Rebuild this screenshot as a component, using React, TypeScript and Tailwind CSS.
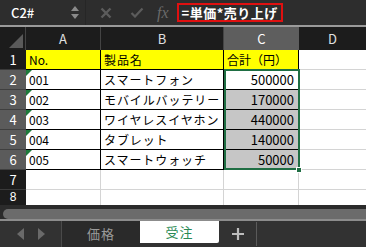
import React from "react";

const F = { fontFamily: '"Noto Sans CJK JP", "Noto Sans", sans-serif' };

const rows = [
  { n: "1", a: "No.", b: "製品名", c: "合計（円）", head: true },
  { n: "2", a: "001", b: "スマートフォン", c: "500000" },
  { n: "3", a: "002", b: "モバイルバッテリー", c: "170000" },
  { n: "4", a: "003", b: "ワイヤレスイヤホン", c: "440000" },
  { n: "5", a: "004", b: "タブレット", c: "140000" },
  { n: "6", a: "005", b: "スマートウォッチ", c: "50000" },
];

function Tri() {
  return (
    <span className="absolute left-0 top-0 w-0 h-0 border-t-[6px] border-t-[#1e7a3c] border-r-[6px] border-r-transparent" />
  );
}

export default function App() {
  return (
    <div className="w-[366px] h-[247px] overflow-hidden bg-white flex flex-col" style={F}>
      {/* Formula bar */}
      <div className="h-[25px] bg-[#2d2d2d] flex items-center shrink-0">
        <div className="w-[86px] h-full flex items-center justify-between pl-[11px] pr-[6px] border-r border-[#262626]">
          <span className="text-white text-[13px] font-medium leading-none">C2#</span>
          <div className="flex flex-col gap-[3px] items-center">
            <span className="w-0 h-0 border-l-[4px] border-r-[4px] border-b-[5px] border-l-transparent border-r-transparent border-b-[#8a8a8a]" />
            <span className="w-0 h-0 border-l-[4px] border-r-[4px] border-t-[5px] border-l-transparent border-r-transparent border-t-[#8a8a8a]" />
          </div>
        </div>
        <div className="w-[40px] flex justify-center">
          <svg width="12" height="12" viewBox="0 0 12 12">
            <path d="M1.5 1.5 L10.5 10.5 M10.5 1.5 L1.5 10.5" stroke="#5c5c5c" strokeWidth="2.4" />
          </svg>
        </div>
        <div className="w-[22px] flex justify-center">
          <svg width="14" height="11" viewBox="0 0 14 11">
            <path d="M1.5 6 L5 9.5 L12.5 1.5" stroke="#5c5c5c" strokeWidth="2.2" fill="none" />
          </svg>
        </div>
        <span className="ml-[9px] text-[#6a6a6a] text-[16px] italic leading-none" style={{ fontFamily: '"Liberation Serif", serif' }}>
          fx
        </span>
        <div className="ml-[8px] h-[19px] border-2 border-[#e01010] flex items-center px-[3px]">
          <span className="text-white text-[13px] font-bold leading-none tracking-[0.5px]">=単価*売り上げ</span>
        </div>
      </div>
      <div className="h-[2px] bg-[#9a9a9a] shrink-0" />
      {/* Column headers */}
      <div className="h-[23px] grid grid-cols-[26px_75px_123px_75px_1fr] bg-[#1c1c1c] shrink-0 text-[13px] text-[#e0e0e0]">
        <div className="relative border-r border-[#444]">
          <svg className="absolute right-[2px] bottom-[2px]" width="14" height="14" viewBox="0 0 14 14">
            <path d="M14 0 L14 14 L0 14 Z" fill="#5a5a5a" />
          </svg>
        </div>
        <div className="flex items-center justify-center border-r border-[#444]">A</div>
        <div className="flex items-center justify-center border-r border-[#444]">B</div>
        <div className="flex items-center justify-center bg-[#5e5e5e] text-white">C</div>
        <div className="flex items-center justify-center">D</div>
      </div>
      {/* Grid */}
      <div className="relative h-[155px] overflow-hidden shrink-0">
        <div className="grid grid-cols-[26px_75px_123px_75px_1fr] grid-rows-[repeat(7,20px)_15px] text-[12px] text-black">
          {rows.map((r, i) => (
            <React.Fragment key={r.n}>
              <div
                className={
                  "flex items-center justify-center text-[13px] text-white border-b " +
                  (i === 0 ? "bg-[#1c1c1c] border-[#3a3a3a]" : "bg-[#5b5b5b] border-[#3f3f3f]")
                }
              >
                {r.n}
              </div>
              <div
                className={
                  "relative flex items-center pl-[3px] border-r border-b border-black " +
                  (r.head ? "bg-[#ffff00]" : "bg-white")
                }
              >
                {!r.head && <Tri />}
                {r.a}
              </div>
              <div
                className={
                  "flex items-center pl-[3px] border-r border-b border-black tracking-[0.9px] " +
                  (r.head ? "bg-[#ffff00]" : "bg-white")
                }
              >
                {r.b}
              </div>
              <div
                className={
                  "flex items-center border-r border-b border-black " +
                  (r.head
                    ? "bg-[#ffff00] pl-[3px]"
                    : i === 1
                    ? "bg-white justify-end pr-[4px] text-[13px]"
                    : "bg-[#c6c6c6] justify-end pr-[4px] text-[13px]")
                }
              >
                {r.c}
              </div>
              <div className="border-b border-[#d4d4d4] bg-white" />
            </React.Fragment>
          ))}
          {["7", "8"].map((n) => (
            <React.Fragment key={n}>
              <div
                className={
                  "flex justify-center text-white bg-[#1c1c1c] " +
                  (n === "8" ? "items-start pt-[1px] text-[12px] leading-[13px]" : "items-center text-[13px] border-b border-[#3a3a3a]")
                }
                style={n === "8" ? { fontFamily: '"Liberation Sans", sans-serif' } : undefined}
              >
                {n}
              </div>
              <div className={"border-r border-[#d4d4d4] " + (n === "7" ? "border-b" : "")} />
              <div className={"border-r border-[#d4d4d4] " + (n === "7" ? "border-b" : "")} />
              <div className={"border-r border-[#d4d4d4] " + (n === "7" ? "border-b" : "")} />
              <div className={"border-[#d4d4d4] " + (n === "7" ? "border-b" : "")} />
            </React.Fragment>
          ))}
        </div>
        {/* Selection overlay */}
        <div className="absolute left-[224px] top-[19px] w-[76px] h-[101px] border-2 border-[#1f6e43] pointer-events-none" />
        <div className="absolute left-[296px] top-[117px] w-[6px] h-[6px] bg-[#1f6e43] border border-white" />
      </div>
      {/* Scroll area */}
      <div className="h-[4px] bg-[#2b2b2b] shrink-0" />
      <div className="h-[10px] bg-[#2b2b2b] shrink-0 flex">
        <div className="flex-1 ml-[3px] bg-[#6b6b6b] rounded-l-full" />
      </div>
      <div className="h-[2px] bg-[#8c8c8c] shrink-0" />
      {/* Tab bar */}
      <div className="flex-1 bg-[#323232] flex items-stretch">
        <div className="w-[62px] flex items-center justify-center gap-[14px] border-r border-[#4a4a4a]">
          <span className="w-0 h-0 border-t-[6px] border-b-[6px] border-r-[7px] border-t-transparent border-b-transparent border-r-[#6a6a6a]" />
          <span className="w-0 h-0 border-t-[6px] border-b-[6px] border-l-[7px] border-t-transparent border-b-transparent border-l-[#6a6a6a]" />
        </div>
        <div className="w-[78px] flex items-center justify-center text-[13px] text-[#9a9a9a] bg-[#2a2a2a] tracking-[1px]">価格</div>
        <div className="w-[79px] mb-[4px] flex items-center justify-center text-[13px] text-[#2a8a55] bg-white rounded-br-[2px] tracking-[1px]">
          受注
        </div>
        <div className="w-[38px] flex items-center justify-center border-r border-[#5a5a5a] my-[1px]">
          <svg width="12" height="12" viewBox="0 0 12 12">
            <path d="M6 0 V12 M0 6 H12" stroke="#bdbdbd" strokeWidth="2.2" />
          </svg>
        </div>
        <div className="flex-1" />
      </div>
    </div>
  );
}
